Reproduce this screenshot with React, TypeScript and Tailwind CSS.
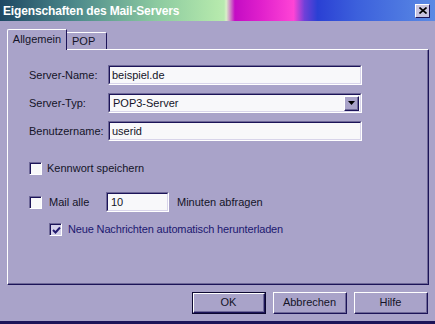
import type { ReactNode } from "react";

const font = { fontFamily: '"Liberation Sans", Arial, sans-serif' };

function Sunken({ className = "", children }: { className?: string; children?: ReactNode }) {
  return (
    <div className={`border-t border-l border-b border-r border-t-[#6e6898] border-l-[#6e6898] border-b-white border-r-white ${className}`}>
      <div className="h-full w-full border-t border-l border-b border-r border-t-[#1c1458] border-l-[#1c1458] border-b-[#d8d4ea] border-r-[#d8d4ea] bg-[#f8f8fa] flex items-center">
        {children}
      </div>
    </div>
  );
}

function Raised({ className = "", children }: { className?: string; children?: ReactNode }) {
  return (
    <div className={`border-t border-l border-b border-r border-t-white border-l-white border-b-[#1c1458] border-r-[#1c1458] ${className}`}>
      <div className="h-full w-full border-b border-r border-b-[#6e6898] border-r-[#6e6898] flex items-center justify-center">
        {children}
      </div>
    </div>
  );
}

function Checkbox({ checked = false, fill = "bg-[#f8f8fa]" }: { checked?: boolean; fill?: string }) {
  return (
    <div className="w-[13px] h-[13px] border-t border-l border-b border-r border-t-[#6e6898] border-l-[#6e6898] border-b-white border-r-white">
      <div className={`w-full h-full border-t border-l border-t-[#1c1458] border-l-[#1c1458] ${fill} flex items-center justify-center`}>
        {checked && (
          <svg width="9" height="9" viewBox="0 0 9 9">
            <path d="M1 4 L3.5 6.5 L8 1.5" stroke="#241c70" strokeWidth="2" fill="none" />
          </svg>
        )}
      </div>
    </div>
  );
}

function Field({ label, children }: { label: string; children: ReactNode }) {
  return (
    <div className="flex items-center h-[20px]">
      <div className="w-[79px] text-[11px] text-[#141428]">{label}</div>
      {children}
    </div>
  );
}

export default function App() {
  return (
    <div className="w-[435px] h-[324px] bg-[#a9a3c9] flex flex-col overflow-hidden" style={font}>
      {/* title bar */}
      <div className="h-[21px] flex items-center justify-between pl-[3px] pr-[5px] bg-[linear-gradient(90deg,#1e4864_0%,#4f8c8c_18%,#8ccaa0_36%,#b4e8ac_50%,#b8eab0_51.5%,#d8f0c8_52%,#c40cc4_54%,#e020cc_60%,#ff44d6_67.5%,#7040d8_70%,#2a40d4_73%,#3c60dc_82%,#5a8ae4_100%)]">
        <span className="text-white text-[12px] font-bold tracking-[-0.15px]">Eigenschaften des Mail-Servers</span>
        <div className="w-[15px] h-[14px] bg-[#c8c4e0] border-t border-l border-b border-r border-t-white border-l-white border-b-[#1c1458] border-r-[#1c1458] flex items-center justify-center">
          <svg width="8" height="7" viewBox="0 0 8 7">
            <path d="M0.5 0.5 L7.5 6.5 M7.5 0.5 L0.5 6.5" stroke="#000" strokeWidth="1.6" />
          </svg>
        </div>
      </div>

      {/* tabs */}
      <div className="mt-[8px] pl-[7px] pr-[6px]">
        <div className="flex items-end h-[20px]">
          <div className="relative z-10 -mb-px h-[21px] w-[60px] bg-[#a9a3c9] border-t border-l border-r border-t-white border-l-white border-r-[#1c1458] rounded-tl-[2px] flex items-center justify-center text-[11px] text-[#141428] pb-[1px]">
            Allgemein
          </div>
          <div className="h-[17px] w-[40px] border-t border-r border-t-white border-r-[#1c1458] rounded-tr-[2px] flex items-center pl-[5px] text-[11px] text-[#141428]">
            POP
          </div>
        </div>

        {/* panel */}
        <div className="h-[236px] border-t border-l border-b border-r border-t-white border-l-white border-b-[#1c1458] border-r-[#1c1458]">
          <div className="h-full border-b border-r border-b-[#6e6898] border-r-[#6e6898] pl-[21px] pt-[15px] flex flex-col">
            <div className="flex flex-col gap-[8px]">
              <Field label="Server-Name:">
                <Sunken className="w-[254px] h-[20px]">
                  <span className="pl-[2px] text-[11px] text-[#141428]">beispiel.de</span>
                </Sunken>
              </Field>
              <Field label="Server-Typ:">
                <Sunken className="w-[254px] h-[20px]">
                  <span className="flex-1 pl-[3px] text-[11px] text-[#141428]">POP3-Server</span>
                  <Raised className="w-[15px] h-[15px] mr-[1px] bg-[#a9a3c9]">
                    <svg width="7" height="4" viewBox="0 0 7 4">
                      <path d="M0 0 H7 L3.5 4 Z" fill="#000" />
                    </svg>
                  </Raised>
                </Sunken>
              </Field>
              <Field label="Benutzername:">
                <Sunken className="w-[254px] h-[20px]">
                  <span className="pl-[2px] text-[11px] text-[#141428]">userid</span>
                </Sunken>
              </Field>
            </div>

            <div className="mt-[21px] flex items-center h-[12px] gap-[4px]">
              <Checkbox />
              <span className="text-[11px] text-[#141428] ml-[1px]">Kennwort speichern</span>
            </div>

            <div className="mt-[18px] flex items-center h-[20px]">
              <Checkbox />
              <span className="ml-[7px] w-[57px] text-[11px] text-[#141428]">Mail alle</span>
              <Sunken className="w-[63px] h-[20px]">
                <span className="pl-[3px] text-[11px] text-[#141428]">10</span>
              </Sunken>
              <span className="ml-[8px] text-[11px] text-[#141428]">Minuten abfragen</span>
            </div>

            <div className="mt-[11px] pl-[20px] flex items-center h-[13px]">
              <Checkbox checked fill="bg-[#d4d0ea]" />
              <span className="ml-[6px] text-[11px] text-[#1c1870] tracking-[-0.15px]">Neue Nachrichten automatisch herunterladen</span>
            </div>
          </div>
        </div>
      </div>

      {/* buttons */}
      <div className="mt-[7px] pr-[7px] flex justify-end gap-[7px]">
        <div className="w-[74px] h-[22px] border border-[#0c0830]">
          <Raised className="w-full h-full">
            <span className="text-[11px] text-[#141428]">OK</span>
          </Raised>
        </div>
        <Raised className="w-[74px] h-[22px]">
          <span className="text-[11px] text-[#141428]">Abbrechen</span>
        </Raised>
        <Raised className="w-[74px] h-[22px]">
          <span className="text-[11px] text-[#141428]">Hilfe</span>
        </Raised>
      </div>

      <div className="mt-[7px] h-[3px] bg-[#1c1458]" />
    </div>
  );
}
